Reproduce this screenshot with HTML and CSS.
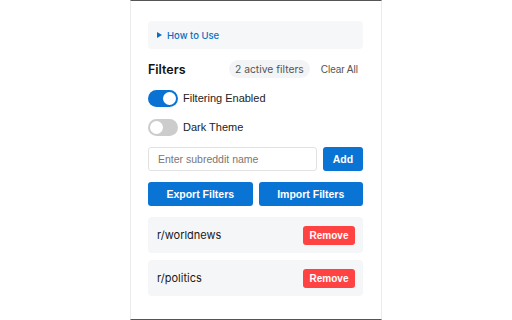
FILE: index.html
```html
<!DOCTYPE html>
<html>
<head>
<meta charset="utf-8">
<link rel="stylesheet" href="styles.css">
</head>
<body>
<div class="panel">
  <div class="howto"><span class="tri"></span><span class="howto-text">How to Use</span></div>
  <div class="header">
    <span class="title">Filters</span>
    <span class="pill">2 active filters</span>
    <span class="clear">Clear All</span>
  </div>
  <div class="toggle-row">
    <span class="switch on"><span class="knob"></span></span>
    <span class="label">Filtering Enabled</span>
  </div>
  <div class="toggle-row">
    <span class="switch"><span class="knob"></span></span>
    <span class="label">Dark Theme</span>
  </div>
  <div class="add-row">
    <div class="input">Enter subreddit name</div>
    <div class="btn add">Add</div>
  </div>
  <div class="btn-row">
    <div class="btn wide">Export Filters</div>
    <div class="btn wide">Import Filters</div>
  </div>
  <div class="list">
    <div class="item"><span class="name">r/worldnews</span><span class="remove">Remove</span></div>
    <div class="item"><span class="name">r/politics</span><span class="remove">Remove</span></div>
  </div>
</div>
</body>
</html>
```
FILE: styles.css
```css
html, body {
  margin: 0;
  padding: 0;
  background: #ffffff;
}
body {
  font-family: Inter, "Liberation Sans", sans-serif;
  color: #1a1a1a;
}
.panel {
  box-sizing: border-box;
  width: 252px;
  height: 320px;
  margin: 0 auto;
  border-top: 1px solid #555555;
  border-bottom: 1px solid #555555;
  border-left: 1px solid #ececec;
  border-right: 1px solid #ececec;
  padding: 20px 18px 0 17px;
  display: flex;
  flex-direction: column;
}
.howto {
  height: 28px;
  background: #f6f7f8;
  border-radius: 4px;
  display: flex;
  align-items: center;
  padding-left: 9px;
  margin-bottom: 11px;
}
.tri {
  width: 0;
  height: 0;
  border-top: 3px solid transparent;
  border-bottom: 3px solid transparent;
  border-left: 5px solid #0a6fc2;
  margin-right: 5px;
}
.howto-text {
  font-size: 9.5px;
  color: #0a6fc2;
  font-weight: 500;
}
.header {
  height: 18px;
  display: flex;
  align-items: center;
  margin-bottom: 11px;
}
.title {
  font-size: 12.5px;
  font-weight: 600;
  color: #111;
  flex: 1;
}
.pill {
  background: #f3f4f6;
  border-radius: 9px;
  height: 18px;
  line-height: 18px;
  padding: 0 6px;
  font-size: 10.3px;
  color: #555;
  margin-right: 11px;
}
.clear {
  font-family: "Liberation Sans", Arial, sans-serif;
  font-size: 10px;
  color: #555;
  margin-right: 5px;
}
.toggle-row {
  height: 18px;
  display: flex;
  align-items: center;
  margin-bottom: 11px;
}
.switch {
  box-sizing: border-box;
  width: 30px;
  height: 17px;
  border-radius: 9px;
  background: #cccccc;
  padding: 2px;
  display: flex;
  justify-content: flex-start;
  margin-right: 5px;
}
.switch.on {
  background: #0a72d2;
  justify-content: flex-end;
}
.knob {
  width: 13px;
  height: 13px;
  border-radius: 50%;
  background: #fff;
}
.label {
  font-family: "Liberation Sans", Arial, sans-serif;
  font-size: 11px;
  color: #222;
}
.add-row {
  height: 24px;
  display: flex;
  gap: 6px;
  margin-bottom: 11px;
}
.input {
  flex: 1;
  box-sizing: border-box;
  border: 1px solid #e2e2e2;
  border-radius: 3px;
  padding-left: 9px;
  display: flex;
  align-items: center;
  font-family: "Liberation Sans", Arial, sans-serif;
  font-size: 10.5px;
  color: #777;
}
.btn {
  background: #0a74d4;
  color: #fff;
  border-radius: 3px;
  display: flex;
  align-items: center;
  justify-content: center;
  font-family: "Liberation Sans", Arial, sans-serif;
  font-size: 10.5px;
  font-weight: 700;
}
.add {
  width: 40px;
}
.btn-row {
  height: 24px;
  display: flex;
  gap: 6px;
  margin-bottom: 11px;
}
.wide {
  flex: 1;
}
.list {
  display: flex;
  flex-direction: column;
  gap: 7px;
}
.item {
  height: 36px;
  background: #f5f6f8;
  border-radius: 4px;
  display: flex;
  align-items: center;
  justify-content: space-between;
  padding: 0 8px 0 9px;
}
.name {
  font-size: 11px;
  color: #1a1a1a;
}
.remove {
  width: 52px;
  height: 19px;
  background: #ff4242;
  color: #fff;
  border-radius: 3px;
  display: flex;
  align-items: center;
  justify-content: center;
  font-family: "Liberation Sans", Arial, sans-serif;
  font-size: 10px;
  font-weight: 700;
}
```
